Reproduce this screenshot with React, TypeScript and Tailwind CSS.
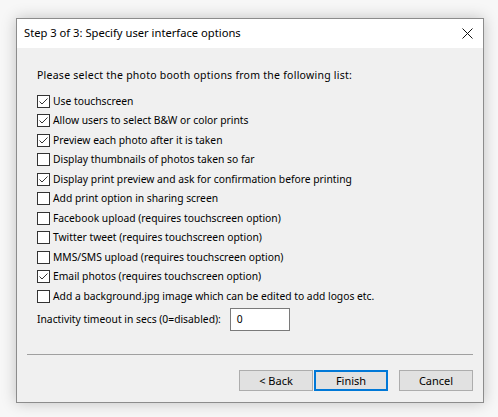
import React, { useState } from "react";

const OPTIONS: { label: string; checked: boolean }[] = [
  { label: "Use touchscreen", checked: true },
  { label: "Allow users to select B&W or color prints", checked: true },
  { label: "Preview each photo after it is taken", checked: true },
  { label: "Display thumbnails of photos taken so far", checked: false },
  { label: "Display print preview and ask for confirmation before printing", checked: true },
  { label: "Add print option in sharing screen", checked: false },
  { label: "Facebook upload (requires touchscreen option)", checked: false },
  { label: "Twitter tweet (requires touchscreen option)", checked: false },
  { label: "MMS/SMS upload (requires touchscreen option)", checked: false },
  { label: "Email photos (requires touchscreen option)", checked: true },
  { label: "Add a background.jpg image which can be edited to add logos etc.", checked: false },
];

function Checkbox({ checked }: { checked: boolean }) {
  return (
    <span className="flex h-[13px] w-[13px] shrink-0 items-center justify-center border border-[#333333] bg-white">
      {checked && (
        <svg width="11" height="11" viewBox="0 0 11 11" fill="none">
          <path d="M1.5 5.5 L4 8 L9.5 2.5" stroke="#333333" strokeWidth="1" />
        </svg>
      )}
    </span>
  );
}

function DialogButton({ label, primary }: { label: string; primary?: boolean }) {
  return (
    <button
      className={
        primary
          ? "h-[21px] w-[74px] border-2 border-[#0078d7] bg-[#e1e1e1] text-[11px] leading-none text-black"
          : "h-[21px] w-[74px] border border-[#adadad] bg-[#e1e1e1] text-[11px] leading-none text-black"
      }
    >
      {label}
    </button>
  );
}

export default function App() {
  const [opts] = useState(OPTIONS);

  return (
    <div
      className="h-[417px] w-[498px] bg-[#f7f7f7] pl-[16px] pt-[18px]"
      style={{ fontFamily: '"Noto Sans", "Open Sans", sans-serif' }}
    >
      <div className="flex h-[385px] w-[468px] flex-col border border-[#8c8c8c] bg-[#f0f0f0] shadow-[0_0_14px_rgba(0,0,0,0.22)]">
        {/* title bar */}
        <div className="flex h-[29px] shrink-0 items-center justify-between bg-white pl-[7px] pr-[10px]">
          <span className="text-[11.2px] text-black">Step 3 of 3: Specify user interface options</span>
          <svg width="11" height="11" viewBox="0 0 11 11">
            <path d="M0.5 0.5 L10.5 10.5 M10.5 0.5 L0.5 10.5" stroke="#111" strokeWidth="1" />
          </svg>
        </div>

        <div className="flex flex-1 flex-col px-[20px] pt-[18px] text-[10.3px] text-black">
          <div className="h-[19.5px] text-[10.5px] leading-[19.5px] tracking-[0.25px]">
            Please select the photo booth options from the following list:
          </div>

          <div className="mt-[6px] flex flex-col">
            {opts.map((o) => (
              <label key={o.label} className="flex h-[19.5px] items-center gap-[3px]">
                <Checkbox checked={o.checked} />
                <span className="whitespace-nowrap">{o.label}</span>
              </label>
            ))}
          </div>

          <div className="mt-[2px] flex items-center gap-[9px]">
            <span>Inactivity timeout in secs (0=disabled):</span>
            <div className="flex h-[23px] w-[60px] items-center border border-[#7a7a7a] bg-white pl-[6px]">0</div>
          </div>
        </div>

        <div className="mx-[10px] h-px shrink-0 bg-[#a0a0a0]" />

        <div className="flex shrink-0 justify-end px-[10px] pb-[11px] pt-[15px]">
          <DialogButton label="< Back" />
          <div className="w-px" />
          <DialogButton label="Finish" primary />
          <div className="w-[11px]" />
          <DialogButton label="Cancel" />
        </div>
      </div>
    </div>
  );
}
